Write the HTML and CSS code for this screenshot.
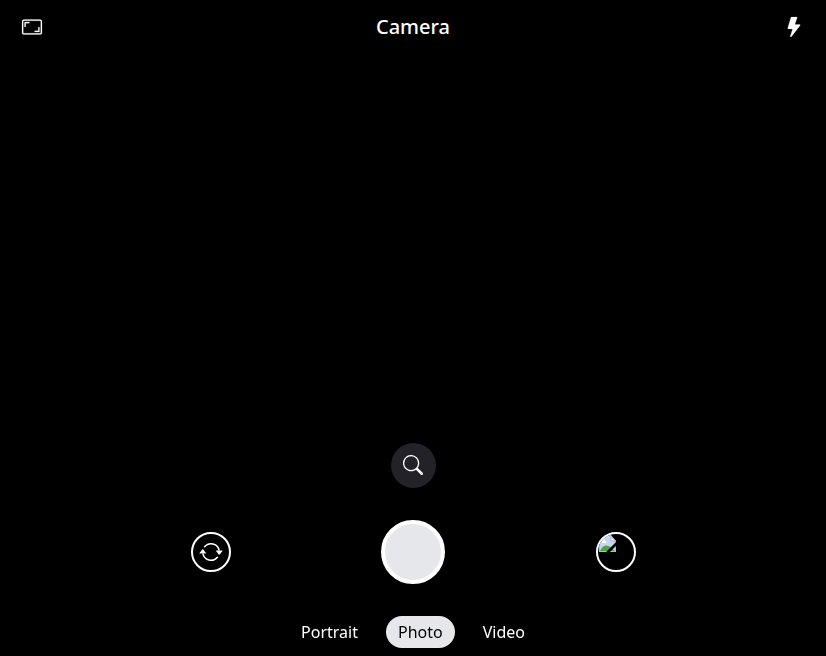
FILE: index.html
```html
<!DOCTYPE html>
<html lang="en">
<head>
<meta charset="utf-8">
<title>Camera</title>
<link rel="stylesheet" href="styles.css">
</head>
<body>
<div class="app">
  <header class="topbar">
    <button class="icon-button" aria-label="Aspect ratio">
      <svg class="icon icon-bold" viewBox="0 0 16 16"><path d="M0 3.500A1.500 1.500 0 0 1 1.500 2h13A1.500 1.500 0 0 1 16 3.500v9a1.500 1.500 0 0 1-1.500 1.500h-13A1.500 1.500 0 0 1 0 12.500zM1.500 3a.5.5 0 0 0-.5.5v9a.5.5 0 0 0 .5.5h13a.5.5 0 0 0 .5-.5v-9a.5.5 0 0 0-.5-.5z"/><path d="M2 4.500a.5.5 0 0 1 .5-.5h3a.5.5 0 0 1 0 1H3v2.500a.5.5 0 0 1-1 0zm12 7a.5.5 0 0 1-.5.5h-3a.5.5 0 0 1 0-1H13V8.500a.5.5 0 0 1 1 0z"/></svg>
    </button>
    <h1 class="title">Camera</h1>
    <button class="icon-button" aria-label="Flash">
      <svg class="icon icon-bold" viewBox="0 0 16 16"><path d="M5.520.359A.5.5 0 0 1 6 0h4a.5.5 0 0 1 .474.658L8.694 6H12.500a.5.5 0 0 1 .395.807l-7 9a.5.5 0 0 1-.873-.454L6.823 9.500H3.500a.5.5 0 0 1-.48-.641z"/></svg>
    </button>
  </header>
  <main class="viewfinder">
    <button class="zoom" aria-label="Zoom">
      <svg class="icon" viewBox="0 0 16 16"><path d="M11.742 10.344a6.500 6.500 0 1 0-1.397 1.398h-.001q.044.06.098.115l3.850 3.850a1 1 0 0 0 1.415-1.414l-3.850-3.850a1 1 0 0 0-.115-.1zM12 6.500a5.500 5.500 0 1 1-11 0 5.500 5.500 0 0 1 11 0"/></svg>
    </button>
  </main>
  <section class="controls">
    <button class="round switch" aria-label="Switch camera">
      <svg class="icon icon-large" viewBox="0 0 16 16"><path d="M11.534 7h3.932a.25.25 0 0 1 .192.410l-1.966 2.360a.25.25 0 0 1-.384 0l-1.966-2.360a.25.25 0 0 1 .192-.410m-11 2h3.932a.25.25 0 0 0 .192-.410L2.692 6.230a.25.25 0 0 0-.384 0L.342 8.590A.25.25 0 0 0 .534 9"/><path d="M8 3c-1.552 0-2.940.707-3.857 1.818a.5.5 0 1 1-.771-.636A6.002 6.002 0 0 1 13.917 7H12.900A5 5 0 0 0 8 3M3.100 9a5.002 5.002 0 0 0 8.757 2.182.5.5 0 1 1 .771.636A6.002 6.002 0 0 1 2.083 9z"/></svg>
    </button>
    <button class="shutter" aria-label="Take photo"></button>
    <button class="round gallery" aria-label="Gallery">
      <svg class="thumbnail" viewBox="0 0 16 16">
        <path d="M-1-1h12l5 6v11H-1z" fill="#bdbdbd"/>
        <path d="M0 0h11l4 5v10H0z" fill="#c3d5f8"/>
        <path d="M2 6c0-2 2-3 3.500-1C7 5 7 7 6 7H2z" fill="#fff"/>
        <path d="M0 15c1-3 3.500-5.500 6.500-5.500s5.500 2.500 8.500 5.500z" fill="#50a637"/>
        <path d="M11 .5V5h4.500z" fill="#fff" stroke="#b0b0b0"/>
        <path d="M17 7l-10 10" stroke="#000" stroke-width="2.600"/>
      </svg>
    </button>
  </section>
  <nav class="modes">
    <button class="mode">Portrait</button>
    <button class="mode active">Photo</button>
    <button class="mode">Video</button>
  </nav>
</div>
</body>
</html>
```
FILE: styles.css
```css
* { box-sizing: border-box; }
body {
  margin: 0;
  background: #000;
  color: #fff;
  font-family: "Noto Sans", sans-serif;
}
button {
  margin: 0;
  padding: 0;
  border: 0;
  background: none;
  color: inherit;
  font: inherit;
}
.app {
  display: flex;
  flex-direction: column;
  height: 100vh;
  overflow: hidden;
}
.topbar {
  display: flex;
  align-items: center;
  justify-content: space-between;
  height: 54px;
  padding: 0 16px;
}
.icon-button {
  display: grid;
  place-items: center;
  width: 32px;
  height: 32px;
}
.icon {
  display: block;
  width: 20px;
  height: 20px;
  fill: currentColor;
}
.icon-large { width: 24px; height: 24px; }
.icon-bold {
  overflow: visible;
  stroke: currentColor;
  stroke-width: 0.15;
}
.title {
  margin: 0;
  font-size: 20px;
  font-weight: 500;
  line-height: 28px;
}
.viewfinder {
  display: flex;
  flex: 1;
  align-items: flex-end;
  justify-content: center;
  padding-bottom: 16px;
}
.zoom {
  display: grid;
  place-items: center;
  width: 45px;
  height: 45px;
  padding-bottom: 2px;
  border-radius: 50%;
  background: #222228;
}
.controls {
  display: grid;
  grid-template-columns: 40px 64px 40px;
  column-gap: 150px;
  align-items: center;
  height: 96px;
  padding-left: 191px;
}
.round {
  display: grid;
  place-items: center;
  width: 40px;
  height: 40px;
  border: 2px solid #fff;
  border-radius: 50%;
  overflow: hidden;
}
.switch { padding-right: 1px; }
.gallery { place-items: start; margin-left: 1px; }
.thumbnail {
  display: block;
  width: 16px;
  height: 16px;
  margin: 2px;
  overflow: visible;
}
.shutter {
  width: 64px;
  height: 64px;
  border: 4px solid #fff;
  border-radius: 50%;
  background: #e5e7eb;
}
.modes {
  display: flex;
  justify-content: center;
  gap: 16px;
  height: 56px;
  padding: 16px 0 8px;
  will-change: transform;
}
.mode {
  height: 32px;
  padding: 0 12px;
  border-radius: 16px;
  font-size: 16px;
  line-height: 32px;
}
.active { background: #e5e7eb; color: #000; }
```
